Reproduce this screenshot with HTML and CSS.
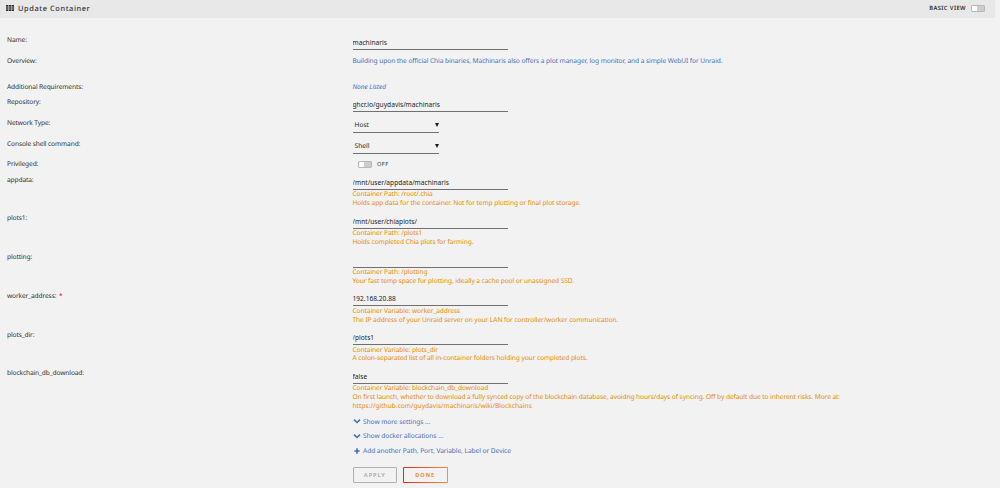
FILE: index.html
```html
<!DOCTYPE html>
<html lang="en">
<head>
    <meta charset="UTF-8">
    <meta name="viewport" content="width=device-width, initial-scale=1.0">
    <title>Update Container</title>
    <link rel="stylesheet" href="styles.css">
</head>
<body>
    <div class="title">
        <svg class="grid-icon" viewBox="0 0 16 12">
            <path d="M0 0h4.6v3.3H0zM5.7 0h4.6v3.3H5.7zM11.4 0H16v3.3h-4.6zM0 4.3h4.6v3.3H0zM5.7 4.3h4.6v3.3H5.7zM11.4 4.3H16v3.3h-4.6zM0 8.7h4.6V12H0zM5.7 8.7h4.6V12H5.7zM11.4 8.7H16V12h-4.6z"/>
        </svg>
        <h1>Update Container</h1>
        <span class="view">BASIC VIEW</span>
        <span class="switch"></span>
    </div>
    <form class="settings">
        <div class="row name">
            <label>Name:</label>
            <div><input type="text" value="machinaris"></div>
        </div>
        <div class="row overview">
            <label>Overview:</label>
            <p class="blue">Building upon the official Chia binaries, Machinaris also offers a plot manager, log monitor, and a simple WebUI for Unraid.</p>
        </div>
        <div class="row requirements">
            <label>Additional Requirements:</label>
            <p class="blue"><em>None Listed</em></p>
        </div>
        <div class="row">
            <label>Repository:</label>
            <div><input type="text" value="ghcr.io/guydavis/machinaris"></div>
        </div>
        <div class="row">
            <label>Network Type:</label>
            <div class="select">Host<i></i></div>
        </div>
        <div class="row console">
            <label>Console shell command:</label>
            <div class="select">Shell<i></i></div>
        </div>
        <div class="row privileged">
            <label>Privileged:</label>
            <div class="toggle"><span class="switch"></span>OFF</div>
        </div>
        <div class="row config">
            <label>appdata:</label>
            <div>
                <input type="text" value="/mnt/user/appdata/machinaris">
                <p class="help">Container Path: /root/.chia<br>Holds app data for the container. Not for temp plotting or final plot storage.</p>
            </div>
        </div>
        <div class="row config">
            <label>plots1:</label>
            <div>
                <input type="text" value="/mnt/user/chiaplots/">
                <p class="help">Container Path: /plots1<br>Holds completed Chia plots for farming.</p>
            </div>
        </div>
        <div class="row config">
            <label>plotting:</label>
            <div>
                <input type="text" value="">
                <p class="help">Container Path: /plotting<br>Your fast temp space for plotting, ideally a cache pool or unassigned SSD.</p>
            </div>
        </div>
        <div class="row config">
            <label>worker_address: <b>*</b></label>
            <div>
                <input type="text" value="192.168.20.88">
                <p class="help">Container Variable: worker_address<br>The IP address of your Unraid server on your LAN for controller/worker communication.</p>
            </div>
        </div>
        <div class="row config">
            <label>plots_dir:</label>
            <div>
                <input type="text" value="/plots1">
                <p class="help">Container Variable: plots_dir<br>A colon-separated list of all in-container folders holding your completed plots.</p>
            </div>
        </div>
        <div class="row last">
            <label>blockchain_db_download:</label>
            <div>
                <input type="text" value="false">
                <p class="help">Container Variable: blockchain_db_download<br>On first launch, whether to download a fully synced copy of the blockchain database, avoidng hours/days of syncing. Off by default due to inherent risks. More at:<br><span class="url">https://github.com/guydavis/machinaris/wiki/Blockchains</span></p>
            </div>
        </div>
        <div class="links">
            <a><svg viewBox="0 0 12 12"><path d="M1.500 4L6 8.200 10.500 4"/></svg>Show more settings ...</a>
            <a><svg viewBox="0 0 12 12"><path d="M1.500 4L6 8.200 10.500 4"/></svg>Show docker allocations ...</a>
            <a><svg viewBox="0 0 12 12"><path d="M6 2v8M2 6h8"/></svg>Add another Path, Port, Variable, Label or Device</a>
        </div>
        <div class="buttons">
            <button type="button" class="apply" disabled>APPLY</button>
            <button type="button" class="done">DONE</button>
        </div>
    </form>
</body>
</html>
```
FILE: styles.css
```css
*{
    box-sizing: border-box;
}
body{
    margin: 0;
    background: #f2f2f2;
    color: #303030;
    font-family: "Noto Sans", sans-serif;
    font-size: 6.6px;
    letter-spacing: -0.07px;
    text-rendering: geometricPrecision;
}
.title{
    display: flex;
    align-items: center;
    width: 995px;
    height: 18px;
    padding: 0 10px 2px 5.5px;
    background: #e8e8e8;
}
.grid-icon{
    width: 8px;
    height: 6px;
    fill: #303030;
}
h1{
    flex: 1;
    margin: 1px 0 0 4.5px;
    font-size: 7.4px;
    font-weight: 500;
    letter-spacing: 0.6px;
}
.view{
    margin-right: 5px;
    font-size: 5.8px;
    font-weight: 600;
    letter-spacing: 0.4px;
}
.switch{
    width: 14px;
    height: 7px;
    border: 1px solid #b8b8b8;
    border-radius: 1px;
    background: linear-gradient(90deg, #fcfcfc 45%, #cccccc 45%);
}
.settings{
    padding: 14.5px 0 0 7px;
}
.row{
    display: grid;
    grid-template-columns: 345.5px 1fr;
    align-items: start;
    height: 21px;
    line-height: 14px;
}
.overview{
    height: 26px;
}
.requirements{
    height: 15px;
}
.console{
    height: 20.5px;
}
.privileged{
    height: 15.5px;
}
.config{
    height: 38.8px;
}
.last{
    height: 47.3px;
}
label{
    letter-spacing: -0.11px;
}
label b{
    margin-left: 1px;
    color: #d00;
    font-weight: 400;
}
p{
    margin: 0;
}
.blue{
    color: #486dba;
}
input{
    display: block;
    width: 155px;
    height: 17.5px;
    padding: 3px 0 0;
    border: 0;
    border-bottom: 1px solid #707070;
    background: transparent;
    color: #1c1b1b;
    font: inherit;
    letter-spacing: 0.02px;
}
.help{
    padding-top: 0.4px;
    color: #e68a00;
    line-height: 8.8px;
}
.url{
    letter-spacing: 0.02px;
}
.select{
    display: flex;
    align-items: center;
    justify-content: space-between;
    width: 86px;
    height: 17.5px;
    padding: 3px 0 0 2px;
    border-bottom: 1px solid #707070;
    color: #1c1b1b;
    letter-spacing: 0.02px;
}
.select i{
    border: 2px solid transparent;
    border-top: 4px solid #1c1b1b;
    border-bottom: 0;
}
.toggle{
    display: flex;
    align-items: center;
    gap: 5px;
    padding-left: 5.5px;
    font-size: 5.6px;
    letter-spacing: 0.5px;
}
.links{
    display: flex;
    flex-direction: column;
    margin-left: 345.5px;
    color: #486dba;
    letter-spacing: -0.05px;
}
.links a{
    display: flex;
    align-items: center;
    gap: 2.5px;
    height: 14.8px;
}
.links svg{
    width: 8px;
    height: 8px;
    fill: none;
    stroke: #486dba;
    stroke-width: 2.4;
}
.buttons{
    display: flex;
    gap: 6px;
    margin: 8.5px 0 0 345.5px;
}
button{
    width: 44.5px;
    height: 16.5px;
    padding: 0;
    border: 1px solid transparent;
    border-radius: 1px;
    font-family: inherit;
    font-size: 5.6px;
    font-weight: 700;
    letter-spacing: 0.9px;
}
.apply{
    border-color: #b0b0b0;
    background: transparent;
    color: #b0b0b0;
}
.done{
    background: linear-gradient(#f2f2f2, #f2f2f2) padding-box, linear-gradient(90deg, #e22828, #ff8c2f) border-box;
    color: #f98a2f;
}
```
